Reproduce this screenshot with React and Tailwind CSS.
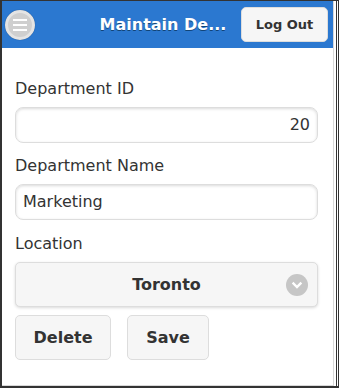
import React from "react";

const font = { fontFamily: '"DejaVu Sans", "Liberation Sans", sans-serif' };

function MenuIcon() {
  return (
    <div className="w-[30px] h-[30px] rounded-full bg-[#cfcfcf] border-[3px] border-[#e4e4e4] flex flex-col items-center justify-center gap-[3px] shadow-[0_0_1px_rgba(0,0,0,0.4)]">
      <span className="block w-[14px] h-[2px] bg-white" />
      <span className="block w-[14px] h-[2px] bg-white" />
      <span className="block w-[14px] h-[2px] bg-white" />
    </div>
  );
}

function ChevronCircle() {
  return (
    <div className="w-[22px] h-[22px] rounded-full bg-[#c6c6c6] flex items-center justify-center">
      <svg width="12" height="12" viewBox="0 0 12 12">
        <path d="M2.5 4.5 L6 8 L9.5 4.5" fill="none" stroke="white" strokeWidth="2.4" strokeLinecap="square" />
      </svg>
    </div>
  );
}

function Label({ children }) {
  return <div className="text-[16px] text-[#333] leading-[20px] mb-[8px]">{children}</div>;
}

function TextInput({ value, align = "left" }) {
  return (
    <div
      className={`h-[36px] rounded-[8px] border border-[#dddddd] bg-white shadow-[inset_0_1px_3px_rgba(0,0,0,0.15)] flex items-center px-[7px] text-[16px] text-[#333] ${
        align === "right" ? "justify-end" : "justify-start"
      }`}
    >
      {value}
    </div>
  );
}

export default function App() {
  return (
    <div style={font} className="w-[339px] h-[388px] bg-white border-t border-l-2 border-b-2 border-[#333] flex overflow-hidden">
      <div className="w-[332px] h-full border-r border-b border-[#d8d8d8] flex flex-col">
        <header className="h-[47px] bg-[#2b78d0] flex items-center px-[3px] shrink-0">
          <MenuIcon />
          <div className="flex-1 text-center text-white font-bold text-[16px] [text-shadow:0_1px_0_#114477] truncate pl-[50px]">
            Maintain De...
          </div>
          <button className="w-[87px] h-[35px] rounded-[5px] bg-[#f6f6f6] border border-[#dddddd] text-[#333] font-bold text-[13px] mr-[2px]">
            Log Out
          </button>
        </header>
        <main className="pl-[13px] pr-[15px] pt-[31px] flex flex-col">
          <Label>Department ID</Label>
          <TextInput value="20" align="right" />
          <div className="h-[13px]" />
          <Label>Department Name</Label>
          <TextInput value="Marketing" />
          <div className="h-[14px]" />
          <Label>Location</Label>
          <div className="h-[45px] rounded-[5px] border border-[#dddddd] bg-[#f6f6f6] shadow-[0_1px_3px_rgba(0,0,0,0.15)] flex items-center relative">
            <div className="flex-1 text-center font-bold text-[16px] text-[#333]">Toronto</div>
            <div className="absolute right-[9px] top-[11px]">
              <ChevronCircle />
            </div>
          </div>
          <div className="flex gap-[16px] mt-[8px]">
            <button className="w-[96px] h-[45px] rounded-[5px] border border-[#dddddd] bg-[#f6f6f6] font-bold text-[16px] text-[#333]">
              Delete
            </button>
            <button className="w-[82px] h-[45px] rounded-[5px] border border-[#dddddd] bg-[#f6f6f6] font-bold text-[16px] text-[#333]">
              Save
            </button>
          </div>
        </main>
      </div>
      <div className="w-[2px] bg-white" />
      <div className="w-px bg-[#333]" />
      <div className="w-px bg-white" />
      <div className="w-px bg-[#333]" />
    </div>
  );
}
